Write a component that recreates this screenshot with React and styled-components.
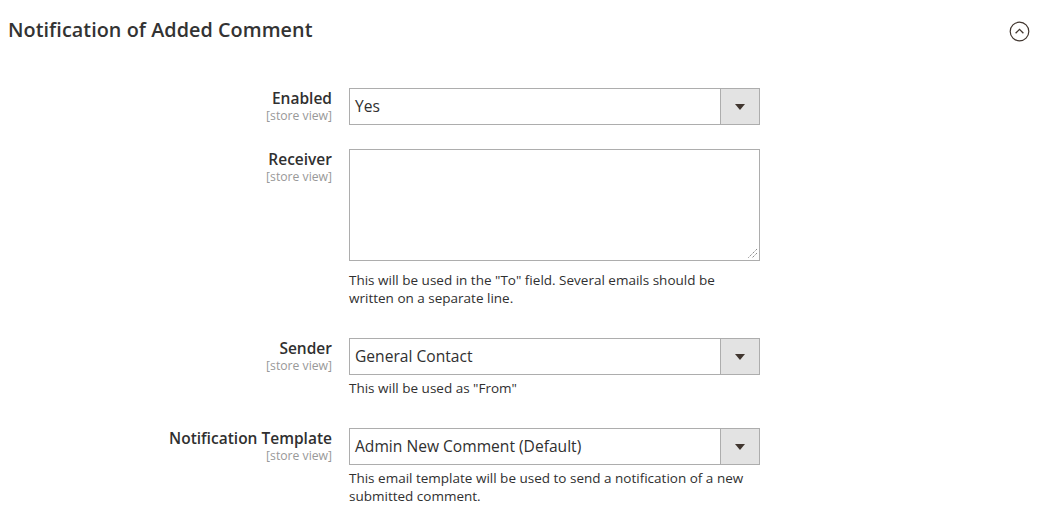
import React from 'react';
import styled, { createGlobalStyle } from 'styled-components';

const GlobalStyle = createGlobalStyle`
  body {
    margin: 0;
    background: #fff;
    font-family: "Open Sans", "Liberation Sans", sans-serif;
    color: #303030;
  }
`;

const Section = styled.div`
  width: 1046px;
  height: 522px;
  overflow: hidden;
`;

const Header = styled.div`
  display: flex;
  align-items: center;
  justify-content: space-between;
  padding: 13px 16px 0 8px;
  height: 32px;
`;

const Title = styled.h2`
  margin: 0;
  font-size: 19.8px;
  font-weight: 600;
  color: #333;
  letter-spacing: 0.05px;
`;

const Toggle = styled.span`
  display: flex;
  margin-top: 5px;
`;

const Fields = styled.div`
  display: flex;
  flex-direction: column;
  padding-top: 43px;
`;

const Row = styled.div`
  display: grid;
  grid-template-columns: 332px 411px;
  column-gap: 17px;
  margin-bottom: ${(p) => p.$gap}px;
`;

const LabelCol = styled.div`
  text-align: right;
`;

const Label = styled.div`
  font-size: 15.5px;
  font-weight: 600;
  line-height: 21px;
  color: #303030;
`;

const Scope = styled.div`
  font-size: 12.2px;
  line-height: 17px;
  margin-top: -2px;
  color: #999;
`;

const Control = styled.div`
  display: flex;
  flex-direction: column;
`;

const Select = styled.div`
  display: flex;
  height: 37px;
  box-sizing: border-box;
  border: 1px solid #adadad;
  background: #fff;
`;

const SelectValue = styled.div`
  flex: 1;
  padding: 0 5px;
  font-size: 15.6px;
  line-height: 34px;
  color: #303030;
`;

const Arrow = styled.div`
  width: 38px;
  border-left: 1px solid #adadad;
  background: #e3e3e3;
  display: flex;
  align-items: center;
  justify-content: center;
`;

const TextArea = styled.div`
  position: relative;
  height: 112px;
  box-sizing: border-box;
  border: 1px solid #adadad;
  background: #fff;
`;

const Grip = styled.svg`
  position: absolute;
  right: 1px;
  bottom: 1px;
`;

const Note = styled.div`
  font-size: 13.5px;
  line-height: 18px;
  color: #303030;
  margin-top: ${(p) => p.$top}px;
`;

const Caret = () => (
  <svg width="10" height="6" viewBox="0 0 10 6">
    <path d="M0 0 L10 0 L5 6 Z" fill="#41362f" />
  </svg>
);

const SelectField = ({ value }) => (
  <Select>
    <SelectValue>{value}</SelectValue>
    <Arrow>
      <Caret />
    </Arrow>
  </Select>
);

const FieldLabel = ({ text }) => (
  <LabelCol>
    <Label>{text}</Label>
    <Scope>[store view]</Scope>
  </LabelCol>
);

export default function App() {
  return (
    <Section>
      <GlobalStyle />
      <Header>
        <Title>Notification of Added Comment</Title>
        <Toggle>
          <svg width="21" height="21" viewBox="0 0 21 21">
            <circle cx="10.5" cy="10.5" r="9.3" fill="none" stroke="#41362f" strokeWidth="1.2" />
            <path d="M6.6 12.3 L10.5 8.4 L14.4 12.3" fill="none" stroke="#41362f" strokeWidth="1.3" />
          </svg>
        </Toggle>
      </Header>
      <Fields>
        <Row $gap={24}>
          <FieldLabel text="Enabled" />
          <Control>
            <SelectField value="Yes" />
          </Control>
        </Row>
        <Row $gap={31}>
          <FieldLabel text="Receiver" />
          <Control>
            <TextArea>
              <Grip width="12" height="12" viewBox="0 0 12 12">
                <path d="M11 2 L2 11 M11 6 L6 11" stroke="#777" strokeWidth="1" strokeDasharray="1.2 1" />
              </Grip>
            </TextArea>
            <Note $top={10}>
              This will be used in the "To" field. Several emails should be written on a separate line.
            </Note>
          </Control>
        </Row>
        <Row $gap={31}>
          <FieldLabel text="Sender" />
          <Control>
            <SelectField value="General Contact" />
            <Note $top={4}>This will be used as "From"</Note>
          </Control>
        </Row>
        <Row $gap={0}>
          <FieldLabel text="Notification Template" />
          <Control>
            <SelectField value="Admin New Comment (Default)" />
            <Note $top={4}>
              This email template will be used to send a notification of a new submitted comment.
            </Note>
          </Control>
        </Row>
      </Fields>
    </Section>
  );
}
